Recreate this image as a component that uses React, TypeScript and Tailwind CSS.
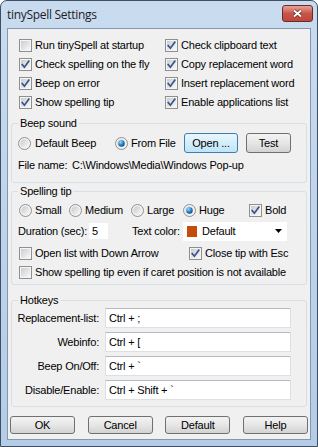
import React from "react";

function Check({ checked }: { checked?: boolean }) {
  return (
    <svg width="13" height="13" viewBox="0 0 13 13" className="shrink-0">
      <defs>
        <linearGradient id="cbg" x1="0" y1="0" x2="1" y2="1">
          <stop offset="0" stopColor="#c9cdd3" />
          <stop offset="1" stopColor="#f8f8f8" />
        </linearGradient>
      </defs>
      <rect x="0.5" y="0.5" width="12" height="12" fill="#f5f5f5" stroke="#8e8f8f" />
      <rect x="2" y="2" width="9" height="9" fill="url(#cbg)" />
      {checked && (
        <path d="M3.2 6.6 L5.4 9.2 L9.8 3.2" fill="none" stroke="#3b5589" strokeWidth="1.7" strokeLinecap="square" />
      )}
    </svg>
  );
}

function Radio({ checked }: { checked?: boolean }) {
  return (
    <svg width="13" height="13" viewBox="0 0 13 13" className="shrink-0">
      <defs>
        <linearGradient id="rbg" x1="0" y1="0" x2="1" y2="1">
          <stop offset="0" stopColor="#c6cad0" />
          <stop offset="1" stopColor="#f8f8f8" />
        </linearGradient>
        <radialGradient id="rdot" cx="0.35" cy="0.3" r="0.8">
          <stop offset="0" stopColor="#9be0fb" />
          <stop offset="0.5" stopColor="#2a87c8" />
          <stop offset="1" stopColor="#0b3f7a" />
        </radialGradient>
      </defs>
      <circle cx="6.5" cy="6.5" r="6" fill="#f3f3f3" stroke="#8e8f8f" />
      <circle cx="6.5" cy="6.5" r="4.3" fill="url(#rbg)" />
      {checked && <circle cx="6.5" cy="6.5" r="3.2" fill="url(#rdot)" />}
    </svg>
  );
}

function CheckItem({ label, checked, className = "" }: { label: string; checked?: boolean; className?: string }) {
  return (
    <div className={"flex items-center gap-[3px] " + className}>
      <Check checked={checked} />
      <span className="whitespace-nowrap">{label}</span>
    </div>
  );
}

function RadioItem({ label, checked, className = "", gap = "gap-[3px]" }: { label: string; checked?: boolean; className?: string; gap?: string }) {
  return (
    <div className={"flex items-center " + gap + " " + className}>
      <Radio checked={checked} />
      <span className="whitespace-nowrap">{label}</span>
    </div>
  );
}

function Group({ title, children, className = "" }: { title: string; children: React.ReactNode; className?: string }) {
  return (
    <div className={"relative border border-[#d5dfe5] rounded-[3px] " + className}>
      <span className="absolute -top-[8px] left-[6px] px-[2px] bg-[#f0f0f0] leading-[14px]">{title}</span>
      {children}
    </div>
  );
}

function Btn({ children, focused, className = "" }: { children: React.ReactNode; focused?: boolean; className?: string }) {
  return (
    <div
      className={
        "flex items-center justify-center rounded-[3px] border " +
        (focused
          ? "border-[#3c7fb1] bg-gradient-to-b from-[#eaf6fd] to-[#bfe4f8] "
          : "border-[#707070] bg-gradient-to-b from-[#f3f3f3] via-[#e6e6e6] to-[#d3d3d3] ") +
        className
      }
    >
      {children}
    </div>
  );
}

function HotRow({ label, value }: { label: string; value: string }) {
  return (
    <div className="flex items-center h-[20px]">
      <span className="w-[87px] text-right whitespace-nowrap">{label}</span>
      <div className="ml-[6px] w-[186px] h-[20px] bg-white border border-[#dbdfe6] border-t-[#b5b9c0] flex items-center pl-[3px]">
        {value}
      </div>
    </div>
  );
}

export default function App() {
  return (
    <div className="w-[318px] h-[447px] border border-[#3f4f63] rounded-t-[7px] bg-gradient-to-b from-[#c9dbef] to-[#b5cce7] px-[6px] flex flex-col font-['Liberation_Sans',Arial,sans-serif] text-[11px] tracking-[-0.2px] text-black overflow-hidden">
      <div className="h-[27px] flex justify-between shrink-0">
        <span className="mt-[7px] text-[12px] leading-[14px] font-['Open_Sans','Noto_Sans',sans-serif] tracking-[-0.3px] text-[#1e1e1e]">
          tinySpell Settings
        </span>
        <div className="mt-[4px] -mr-[2px] w-[31px] h-[17px] rounded-[3px] border border-[#6d2a2a] bg-gradient-to-b from-[#e4a497] via-[#c8544a] to-[#c0463a] flex items-center justify-center">
          <svg width="11" height="9" viewBox="0 0 11 9">
            <path d="M2 1.5 L9 7.5 M9 1.5 L2 7.5" stroke="#5a2020" strokeWidth="3.2" />
            <path d="M2 1.5 L9 7.5 M9 1.5 L2 7.5" stroke="#ffffff" strokeWidth="2" />
          </svg>
        </div>
      </div>

      <div className="h-[412px] border border-[#8398b0] bg-[#f0f0f0] shrink-0">
        <div className="flex flex-col px-[3px] pt-[7px]">
          <div className="grid grid-cols-[146px_1fr] pl-[8px]">
            <CheckItem className="h-[19px]" label="Run tinySpell at startup" />
            <CheckItem className="h-[19px]" label="Check clipboard text" checked />
            <CheckItem className="h-[19px]" label="Check spelling on the fly" checked />
            <CheckItem className="h-[19px]" label="Copy replacement word" checked />
            <CheckItem className="h-[19px]" label="Beep on error" checked />
            <CheckItem className="h-[19px]" label="Insert replacement word" checked />
            <CheckItem className="h-[19px]" label="Show spelling tip" checked />
            <CheckItem className="h-[19px]" label="Enable applications list" checked />
          </div>

          <Group title="Beep sound" className="mt-[11px] pt-[9px] pb-[8px]">
            <div className="flex items-center h-[20px] pl-[6px]">
              <RadioItem className="w-[97px]" gap="gap-[4px]" label="Default Beep" />
              <RadioItem className="w-[69px]" label="From File" checked />
              <Btn focused className="w-[54px] h-[20px]">Open ...</Btn>
              <Btn className="w-[45px] h-[20px] ml-[8px]">Test</Btn>
            </div>
            <div className="flex items-center h-[18px] mt-[3px] pl-[6px] whitespace-nowrap">
              <span className="w-[54px]">File name:</span>
              <span>C:\Windows\Media\Windows Pop-up</span>
            </div>
          </Group>

          <Group title="Spelling tip" className="mt-[8px] pt-[8px] pb-[3px]">
            <div className="flex items-center h-[20px] pl-[7px]">
              <RadioItem className="w-[50px]" label="Small" />
              <RadioItem className="w-[62px]" label="Medium" />
              <RadioItem className="w-[52px]" label="Large" />
              <RadioItem className="w-[66px]" label="Huge" checked />
              <CheckItem label="Bold" checked />
            </div>
            <div className="flex items-center h-[20px] mt-[1px] pl-[6px]">
              <span className="w-[71px] whitespace-nowrap">Duration (sec):</span>
              <div className="w-[19px] h-[16px] bg-white flex items-center pl-[3px]">5</div>
              <span className="ml-[24px] w-[51px] whitespace-nowrap">Text color:</span>
              <div className="w-[104px] h-[19px] bg-white flex items-center pl-[4px]">
                <div className="w-[10px] h-[11px] bg-[#c54c0c]" />
                <span className="ml-[5px]">Default</span>
                <svg width="7" height="4" viewBox="0 0 7 4" className="ml-auto mr-[5px]">
                  <path d="M0 0 H7 L3.5 4 Z" fill="#000" />
                </svg>
              </div>
            </div>
            <div className="flex items-center h-[18px] mt-[3px] pl-[7px]">
              <CheckItem className="w-[170px]" label="Open list with Down Arrow" />
              <CheckItem label="Close tip with Esc" checked />
            </div>
            <div className="flex items-center h-[18px] mt-[1px] pl-[7px]">
              <CheckItem label="Show spelling tip even if caret position is not available" />
            </div>
          </Group>

          <Group title="Hotkeys" className="mt-[15px] pt-[7px] pb-[6px] flex flex-col gap-[4px]">
            <HotRow label="Replacement-list:" value="Ctrl + ;" />
            <HotRow label="Webinfo:" value="Ctrl + [" />
            <HotRow label="Beep On/Off:" value="Ctrl + `" />
            <HotRow label="Disable/Enable:" value="Ctrl + Shift + `" />
          </Group>

          <div className="mt-[9px] -mx-[1px] flex justify-between">
            <Btn className="w-[65px] h-[18px]">OK</Btn>
            <Btn className="w-[65px] h-[18px]">Cancel</Btn>
            <Btn className="w-[65px] h-[18px]">Default</Btn>
            <Btn className="w-[65px] h-[18px]">Help</Btn>
          </div>
        </div>
      </div>
    </div>
  );
}
